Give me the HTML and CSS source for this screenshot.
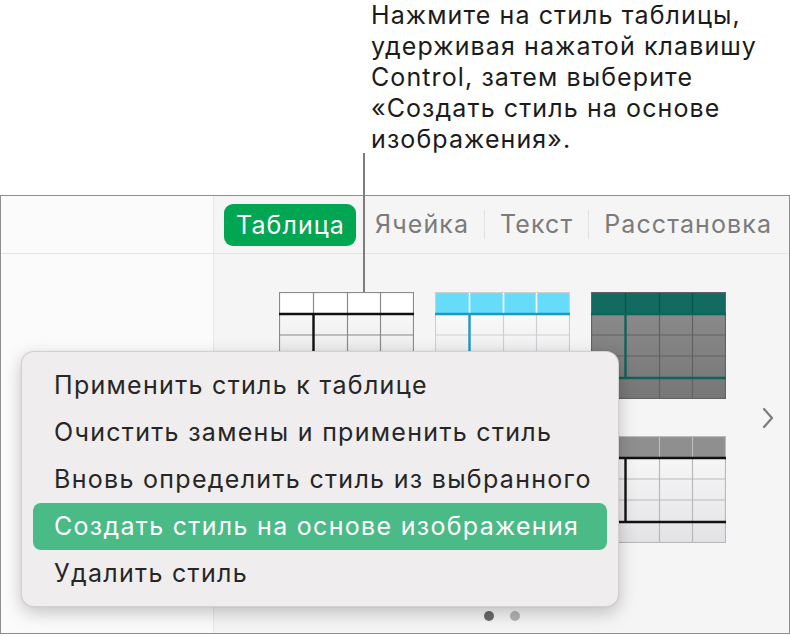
FILE: index.html
```html
<!DOCTYPE html>
<html lang="ru">
<head>
<meta charset="utf-8">
<title>Стили таблиц</title>
<link rel="stylesheet" href="styles.css">
</head>
<body>
<div class="page">
  <p class="callout">Нажмите на стиль таблицы,<br>удерживая нажатой клавишу<br>Control, затем выберите<br>«Создать стиль на основе<br>изображения».</p>
  <div class="leader"></div>

  <div class="window">
    <aside class="sidebar">
      <div class="sidebar-head"></div>
    </aside>
    <section class="inspector">
      <nav class="tabs">
        <span class="tab tab-active">Таблица</span>
        <span class="tab tab-first">Ячейка</span>
        <span class="tab tab-sep">Текст</span>
        <span class="tab tab-sep">Расстановка</span>
      </nav>
      <div class="styles">
        <div class="styles-row">
          <div class="thumbs">
            <svg class="thumb" viewBox="0 0 135 107" width="135" height="107">
              <defs>
                <linearGradient id="ga" x1="0" y1="0" x2="0" y2="1">
                  <stop offset="0" stop-color="#ffffff"/>
                  <stop offset="1" stop-color="#dcdcdf"/>
                </linearGradient>
              </defs>
              <rect x="0.5" y="0.5" width="134" height="106" fill="url(#ga)"/>
              <rect x="0.5" y="0.5" width="134" height="21" fill="#ffffff"/>
              <g stroke="#8a8a8a" stroke-width="1.2" fill="none">
                <rect x="0.5" y="0.5" width="134" height="106"/>
                <line x1="34.5" y1="0" x2="34.5" y2="107"/>
                <line x1="68.5" y1="0" x2="68.5" y2="107"/>
                <line x1="101.5" y1="0" x2="101.5" y2="107"/>
                <line x1="0" y1="43" x2="135" y2="43"/>
                <line x1="0" y1="64" x2="135" y2="64"/>
              </g>
              <g stroke="#111" stroke-width="2.4">
                <line x1="0" y1="22" x2="135" y2="22"/>
                <line x1="34.5" y1="22" x2="34.5" y2="86"/>
                <line x1="0" y1="86" x2="135" y2="86"/>
              </g>
            </svg>
            <svg class="thumb" viewBox="0 0 135 107" width="135" height="107">
              <defs>
                <linearGradient id="gb" x1="0" y1="0" x2="0" y2="1">
                  <stop offset="0" stop-color="#ffffff"/>
                  <stop offset="1" stop-color="#e2e2e5"/>
                </linearGradient>
              </defs>
              <rect x="0.5" y="0.5" width="134" height="106" fill="url(#gb)"/>
              <rect x="0.5" y="0.5" width="134" height="21" fill="#67dcfa"/>
              <g stroke="#cfcfd2" stroke-width="1.2" fill="none">
                <rect x="0.5" y="0.5" width="134" height="106"/>
                <line x1="68.5" y1="22" x2="68.5" y2="107"/>
                <line x1="101.5" y1="22" x2="101.5" y2="107"/>
                <line x1="0" y1="43" x2="135" y2="43"/>
                <line x1="0" y1="64" x2="135" y2="64"/>
              </g>
              <g stroke="#ffffff" stroke-width="1.6">
                <line x1="34.5" y1="1" x2="34.5" y2="21"/>
                <line x1="68.5" y1="1" x2="68.5" y2="21"/>
                <line x1="101.5" y1="1" x2="101.5" y2="21"/>
              </g>
              <g stroke="#1d97c8" stroke-width="2.4">
                <line x1="0" y1="22" x2="135" y2="22"/>
                <line x1="34.5" y1="22" x2="34.5" y2="86"/>
                <line x1="0" y1="86" x2="135" y2="86"/>
              </g>
            </svg>
            <svg class="thumb" viewBox="0 0 135 107" width="135" height="107">
              <defs>
                <linearGradient id="gc" x1="0" y1="0" x2="0" y2="1">
                  <stop offset="0" stop-color="#8e8e8e"/>
                  <stop offset="1" stop-color="#777777"/>
                </linearGradient>
              </defs>
              <rect x="0.5" y="0.5" width="134" height="106" fill="url(#gc)"/>
              <rect x="0.5" y="0.5" width="134" height="21" fill="#126b60"/>
              <g stroke="#626262" stroke-width="1.2" fill="none">
                <rect x="0.5" y="0.5" width="134" height="106"/>
                <line x1="68.5" y1="22" x2="68.5" y2="107"/>
                <line x1="101.5" y1="22" x2="101.5" y2="107"/>
                <line x1="0" y1="43" x2="135" y2="43"/>
                <line x1="0" y1="64" x2="135" y2="64"/>
              </g>
              <g stroke="#0b5249" stroke-width="1.4">
                <line x1="34.5" y1="1" x2="34.5" y2="21"/>
                <line x1="68.5" y1="1" x2="68.5" y2="21"/>
                <line x1="101.5" y1="1" x2="101.5" y2="21"/>
              </g>
              <g stroke="#0f6358" stroke-width="2.4">
                <line x1="0" y1="22" x2="135" y2="22"/>
                <line x1="34.5" y1="22" x2="34.5" y2="86"/>
                <line x1="0" y1="86" x2="135" y2="86"/>
              </g>
            </svg>
            <svg class="thumb" viewBox="0 0 135 107" width="135" height="107">
              <rect x="0.5" y="0.5" width="134" height="106" fill="#f4f4f4" stroke="#bbb"/>
            </svg>
            <svg class="thumb" viewBox="0 0 135 107" width="135" height="107">
              <rect x="0.5" y="0.5" width="134" height="106" fill="#f4f4f4" stroke="#bbb"/>
            </svg>
            <svg class="thumb" viewBox="0 0 135 107" width="135" height="107">
              <defs>
                <linearGradient id="gd" x1="0" y1="0" x2="0" y2="1">
                  <stop offset="0" stop-color="#fbfbfb"/>
                  <stop offset="1" stop-color="#e3e3e6"/>
                </linearGradient>
              </defs>
              <rect x="0.5" y="0.5" width="134" height="106" fill="url(#gd)"/>
              <rect x="0.5" y="0.5" width="134" height="21" fill="#8f8f8f"/>
              <g stroke="#b9b9bc" stroke-width="1.2" fill="none">
                <rect x="0.5" y="0.5" width="134" height="106"/>
                <line x1="68.5" y1="0" x2="68.5" y2="107"/>
                <line x1="101.5" y1="0" x2="101.5" y2="107"/>
                <line x1="0" y1="43" x2="135" y2="43"/>
                <line x1="0" y1="64" x2="135" y2="64"/>
              </g>
              <g stroke="#111" stroke-width="2.4">
                <line x1="0" y1="22" x2="135" y2="22"/>
                <line x1="34.5" y1="22" x2="34.5" y2="86"/>
                <line x1="0" y1="86" x2="135" y2="86"/>
              </g>
            </svg>
          </div>
          <button class="next" aria-label="Далее">
            <svg viewBox="0 0 12 22" width="12" height="22"><path d="M2 2 L10 11 L2 20" fill="none" stroke="#7c7c7c" stroke-width="2.2" stroke-linecap="round" stroke-linejoin="round"/></svg>
          </button>
        </div>
        <div class="dots">
          <span class="dot dot-on"></span>
          <span class="dot"></span>
        </div>
      </div>
    </section>
  </div>

  <ul class="menu">
    <li class="menu-item">Применить стиль к таблице</li>
    <li class="menu-item">Очистить замены и применить стиль</li>
    <li class="menu-item">Вновь определить стиль из выбранного</li>
    <li class="menu-item menu-item-active">Создать стиль на основе изображения</li>
    <li class="menu-item">Удалить стиль</li>
  </ul>
</div>
</body>
</html>
```
FILE: styles.css
```css
* { box-sizing: border-box; }

html, body {
  margin: 0;
  padding: 0;
  background: #ffffff;
}

body {
  font-family: Inter, "Noto Sans", "DejaVu Sans", sans-serif;
  width: 790px;
  height: 636px;
  overflow: hidden;
}

.page {
  position: relative;
  width: 790px;
  height: 636px;
}

.callout {
  margin: 0 0 40px 371px;
  font-size: 25px;
  line-height: 31px;
  letter-spacing: 1.1px;
  color: #1b1b1b;
  height: 155px;
}

.leader {
  position: absolute;
  left: 363px;
  top: 153px;
  width: 2px;
  height: 139px;
  background: #7d7d7d;
  z-index: 2;
}

.window {
  display: flex;
  width: 790px;
  height: 439px;
  border: 1px solid #8e8e8e;
  background: #f5f5f5;
}

.sidebar {
  width: 213px;
  flex: none;
  background: #fbfbfb;
  border-right: 1px solid #e6e6e6;
}

.sidebar-head {
  height: 58px;
  border-bottom: 1px solid #e4e4e4;
}

.inspector {
  flex: 1;
  display: flex;
  flex-direction: column;
}

.tabs {
  height: 58px;
  border-bottom: 1px solid #e4e4e4;
  display: flex;
  align-items: center;
  padding-left: 10px;
  font-size: 25px;
  letter-spacing: 1.1px;
  color: #7b7b7b;
}

.tab {
  line-height: 29px;
  white-space: nowrap;
}

.tab-active {
  background: #00a652;
  color: #ffffff;
  border-radius: 9px;
  height: 42px;
  line-height: 42px;
  padding: 0 11px 0 12px;
  margin-right: 19px;
}

.tab-first {
  padding-right: 15px;
}

.tab-sep {
  border-left: 1px solid #e0e0e0;
  padding: 0 15px;
}

.styles {
  flex: 1;
  display: flex;
  flex-direction: column;
  padding: 38px 0 0 65px;
}

.styles-row {
  display: flex;
  align-items: center;
}

.thumbs {
  display: grid;
  grid-template-columns: repeat(3, 135px);
  grid-auto-rows: 107px;
  column-gap: 21px;
  row-gap: 37px;
}

.thumb {
  display: block;
}

.next {
  margin-left: 36px;
  padding: 0;
  border: 0;
  background: none;
  width: 12px;
  height: 22px;
  display: block;
}

.next svg { display: block; }

.dots {
  display: flex;
  gap: 16px;
  justify-content: center;
  margin: 68px 0 0 -65px;
}

.dot {
  width: 10px;
  height: 10px;
  border-radius: 50%;
  background: #b4b4b4;
}

.dot-on {
  background: #6a6a6a;
}

.menu {
  position: absolute;
  left: 21px;
  top: 351px;
  width: 598px;
  height: 256px;
  margin: 0;
  padding: 10px 11px;
  list-style: none;
  background: #efeded;
  border: 1px solid rgba(0, 0, 0, 0.12);
  border-radius: 13px;
  box-shadow: 0 6px 18px rgba(0, 0, 0, 0.22), 0 0 2px rgba(0, 0, 0, 0.08);
  z-index: 3;
}

.menu-item {
  height: 47px;
  line-height: 47px;
  padding-left: 21px;
  font-size: 25px;
  letter-spacing: 1.3px;
  color: #262626;
  border-radius: 8px;
  white-space: nowrap;
}

.menu-item-active {
  background: #4aba86;
  color: #ffffff;
}
```
